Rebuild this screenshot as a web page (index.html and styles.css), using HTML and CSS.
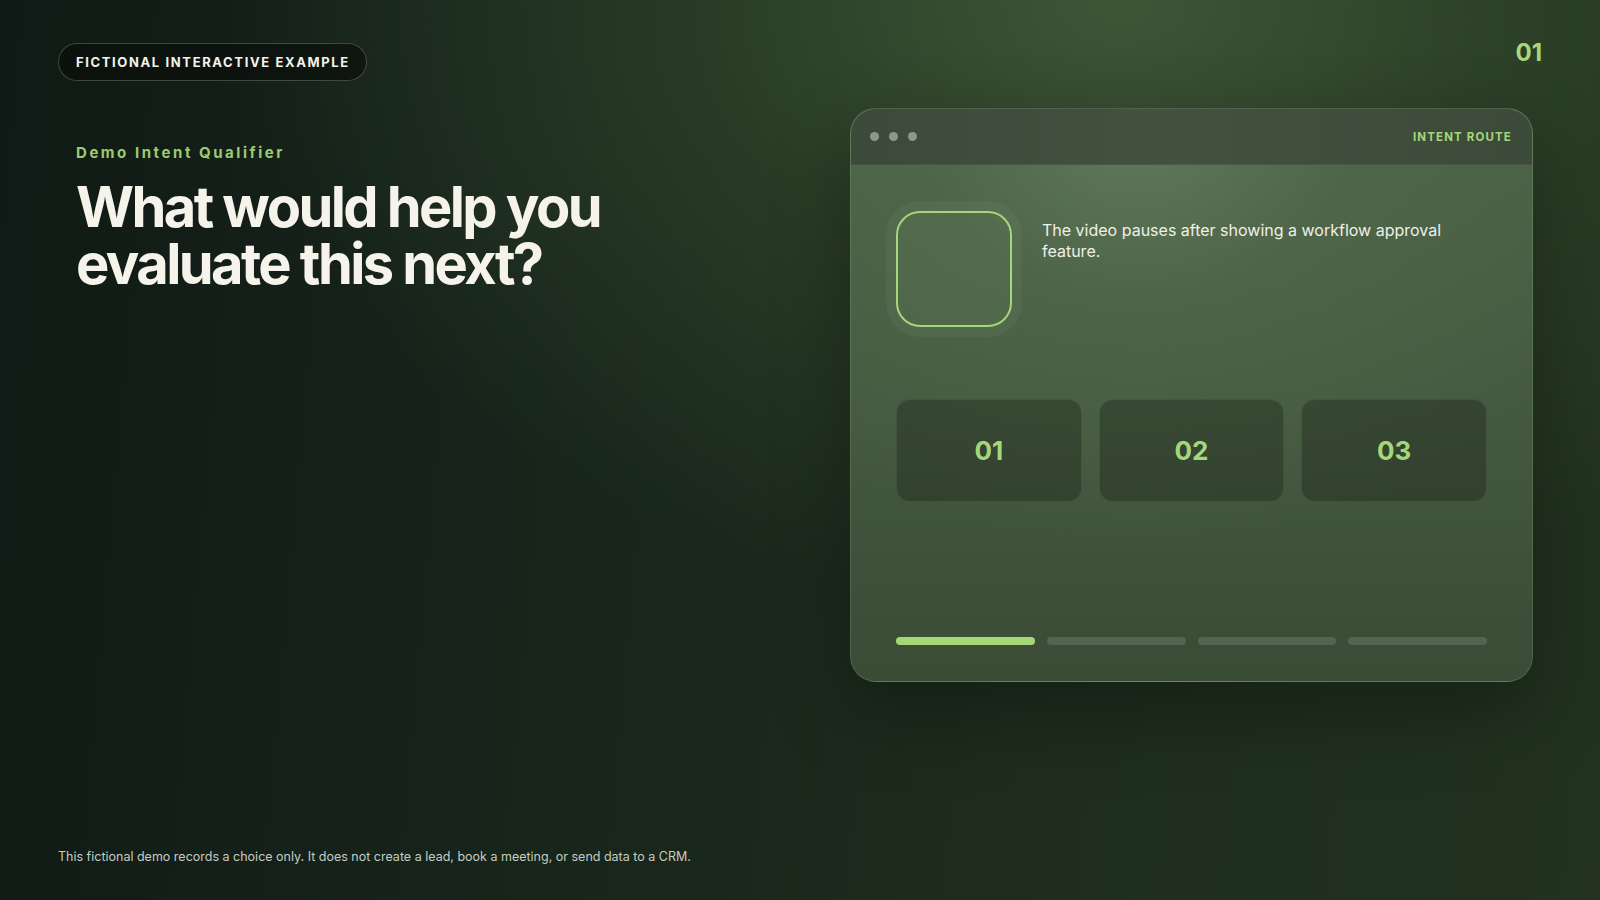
FILE: index.html
```html
<!DOCTYPE html>
<html lang="en">
<head>
<meta charset="utf-8">
<title>Demo Intent Qualifier</title>
<link rel="stylesheet" href="styles.css">
</head>
<body>
<div class="page">
  <header class="topbar">
    <div class="pill">FICTIONAL INTERACTIVE EXAMPLE</div>
    <div class="slide-num">01</div>
  </header>
  <main class="main">
    <section class="intro">
      <div class="eyebrow">Demo Intent Qualifier</div>
      <h1 class="title">What would help you<br>evaluate this next?</h1>
    </section>
    <section class="window">
      <div class="window-head">
        <div class="dots"><span class="dot"></span><span class="dot"></span><span class="dot"></span></div>
        <div class="route">INTENT ROUTE</div>
      </div>
      <div class="window-body">
        <div class="stage">
          <div class="frame"></div>
          <p class="stage-text">The video pauses after showing a workflow approval feature.</p>
        </div>
        <div class="options">
          <div class="option">01</div>
          <div class="option">02</div>
          <div class="option">03</div>
        </div>
        <div class="progress">
          <span class="bar active"></span>
          <span class="bar"></span>
          <span class="bar"></span>
          <span class="bar"></span>
        </div>
      </div>
    </section>
  </main>
  <footer class="footnote">This fictional demo records a choice only. It does not create a lead, book a meeting, or send data to a CRM.</footer>
</div>
</body>
</html>
```

FILE: styles.css
```css
html, body {
  margin: 0;
  padding: 0;
}
body {
  width: 1600px;
  height: 900px;
  overflow: hidden;
  font-family: Inter, "Noto Sans", "Liberation Sans", sans-serif;
  color: #f3f2ea;
  background:
    radial-gradient(ellipse 1050px 720px at 70% 0%, rgba(64, 88, 56, 0.95) 0%, rgba(48, 68, 42, 0.7) 40%, rgba(36, 52, 32, 0) 85%),
    linear-gradient(95deg, #101a16 0%, #16231a 30%, #1e2d1d 65%, #22321f 100%);
}
.page {
  box-sizing: border-box;
  height: 900px;
  padding: 43px 58px 35px 58px;
  display: flex;
  flex-direction: column;
}
.topbar {
  display: flex;
  justify-content: space-between;
  align-items: flex-start;
}
.pill {
  box-sizing: border-box;
  height: 38px;
  display: flex;
  align-items: center;
  padding: 0 16px 0 17px;
  border: 1px solid rgba(255, 255, 255, 0.22);
  border-radius: 19px;
  background: rgba(8, 12, 9, 0.6);
  font-size: 13px;
  font-weight: 700;
  letter-spacing: 0.125em;
  color: #f4f3ec;
}
.slide-num {
  margin-top: -2px;
  font-size: 24px;
  line-height: 1;
  font-weight: 700;
  color: #a7d67b;
}
.main {
  margin-top: 27px;
  display: flex;
  justify-content: space-between;
  align-items: flex-start;
}
.intro {
  padding: 35px 0 0 18px;
}
.eyebrow {
  font-size: 15px;
  font-weight: 700;
  letter-spacing: 0.17em;
  color: #9ccb6f;
}
.title {
  margin: 17px 0 0 0;
  font-size: 56px;
  line-height: 57px;
  font-weight: 700;
  letter-spacing: -0.046em;
  color: #f5f3ea;
}
.window {
  width: 683px;
  box-sizing: border-box;
  margin-right: 9px;
  border: 1px solid rgba(200, 225, 190, 0.16);
  border-radius: 26px;
  overflow: hidden;
  background:
    radial-gradient(ellipse 520px 420px at 42% 4%, rgba(98, 122, 91, 0.95) 0%, rgba(80, 104, 74, 0.7) 40%, rgba(62, 80, 57, 0) 100%),
    linear-gradient(180deg, #4c6247 0%, #44583f 55%, #3a4b36 100%);
  box-shadow: 0 30px 80px rgba(0, 0, 0, 0.3);
}
.window-head {
  box-sizing: border-box;
  height: 56px;
  display: flex;
  align-items: center;
  justify-content: space-between;
  padding: 0 20px 0 19px;
  background: linear-gradient(90deg, #3b4a39 0%, #43523f 45%, #3c4b39 100%);
  border-bottom: 1px solid rgba(255, 255, 255, 0.05);
}
.dots {
  display: flex;
  gap: 10px;
}
.dot {
  width: 9px;
  height: 9px;
  border-radius: 50%;
  background: #8d978a;
}
.route {
  font-size: 11.5px;
  font-weight: 700;
  letter-spacing: 0.1em;
  color: #a6d67a;
}
.window-body {
  padding: 46px 45px 36px 45px;
}
.stage {
  display: flex;
  align-items: flex-start;
  gap: 30px;
}
.frame {
  box-sizing: border-box;
  flex: none;
  width: 116px;
  height: 116px;
  border: 2px solid #a5d67a;
  border-radius: 24px;
  background: rgba(120, 150, 105, 0.12);
  box-shadow: 0 0 0 10px rgba(255, 255, 255, 0.045);
}
.stage-text {
  margin: 9px 0 0 0;
  max-width: 450px;
  font-size: 16px;
  line-height: 21px;
  color: #eef1e8;
}
.options {
  margin-top: 72px;
  display: grid;
  grid-template-columns: repeat(3, 1fr);
  gap: 17px;
}
.option {
  height: 103px;
  box-sizing: border-box;
  display: flex;
  align-items: center;
  justify-content: center;
  border: 1px solid rgba(255, 255, 255, 0.08);
  border-radius: 14px;
  background: rgba(30, 40, 28, 0.42);
  font-size: 26px;
  font-weight: 700;
  color: #a6d67a;
}
.progress {
  margin-top: 135px;
  display: flex;
  gap: 12px;
}
.bar {
  flex: 1;
  height: 8px;
  border-radius: 4px;
  background: rgba(255, 255, 255, 0.13);
}
.bar.active {
  background: #a5d775;
}
.footnote {
  margin-top: auto;
  font-size: 12.5px;
  line-height: 16px;
  color: #c5ccc1;
}
```
